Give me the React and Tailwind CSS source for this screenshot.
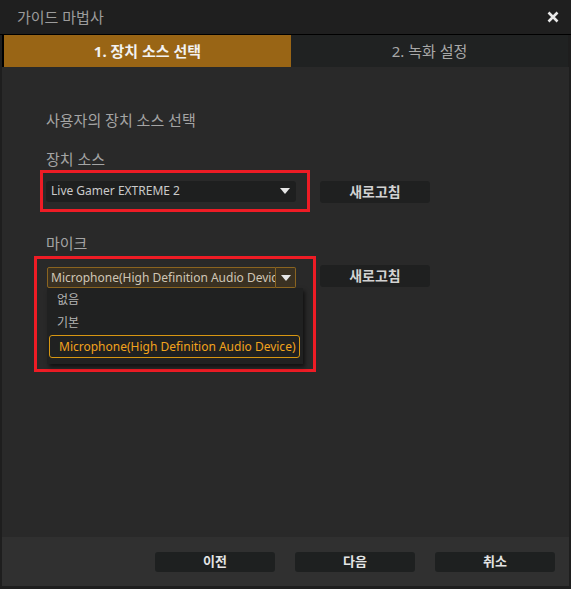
import React from 'react'

const font = { fontFamily: '"Noto Sans", "Noto Sans CJK KR", sans-serif' }

function Caret() {
  return (
    <svg width="10" height="6" viewBox="0 0 10 6">
      <path d="M0 0 L10 0 L5 6 Z" fill="#e6e6e6" />
    </svg>
  )
}

function RefreshButton() {
  return (
    <button className="block w-[110px] h-[22px] rounded-[3px] bg-[#1f2020] text-[14px] font-bold text-[#d2d2d2] leading-none">
      새로고침
    </button>
  )
}

function FooterButton({ children }) {
  return (
    <button className="block w-[120px] h-[20px] rounded-[3px] bg-[#1e2020] text-[13px] font-bold text-[#e4e4e4] leading-none">
      {children}
    </button>
  )
}

export default function App() {
  return (
    <div style={font} className="w-[571px] h-[589px] bg-[#1e1e1e] flex flex-col overflow-hidden">
      {/* title bar */}
      <div className="h-[34px] flex items-center justify-between pl-[17px] pr-[12px] bg-[#1f1f1f]">
        <span className="text-[15px] text-[#9c9c9c]">가이드 마법사</span>
        <svg width="12" height="12" viewBox="0 0 12 12">
          <path d="M1.5 1.5 L10.5 10.5 M10.5 1.5 L1.5 10.5" stroke="#e8e8e8" strokeWidth="2.6" />
        </svg>
      </div>
      <div className="h-[1px] bg-black" />

      {/* tabs */}
      <div className="h-[32px] flex pl-[2px] pr-[3px]">
        <div className="w-[2px] bg-black" />
        <div className="w-[287px] bg-[#996515] flex items-center justify-center text-[15px] font-bold text-[#f2f2f2]">
          1. 장치 소스 선택
        </div>
        <div className="flex-1 bg-[#202222] flex items-center justify-center text-[15px] text-[#a8a8a8]">
          2. 녹화 설정
        </div>
      </div>

      {/* content */}
      <div className="flex-1 mx-[2px] bg-[#292929] flex flex-col pt-[43px]">
        <div className="pl-[44px] text-[15px] text-[#a4a4a4] leading-[20px]">사용자의 장치 소스 선택</div>

        <div className="pl-[44px] mt-[19px] text-[15px] text-[#a4a4a4] leading-[20px]">장치 소스</div>
        <div className="flex items-start mt-[1px] pl-[38px]">
          <div className="w-[270px] h-[42px] border-[3px] border-[#ee1c25] flex items-center pl-[3px]">
            <div className="w-[250px] h-[21px] rounded-[3px] bg-[#1e1f1f] flex items-center justify-between pl-[5px] pr-[6px]">
              <span className="text-[12px] text-[#cacaca]">Live Gamer EXTREME 2</span>
              <Caret />
            </div>
          </div>
          <div className="ml-[10px] mt-[11px]">
            <RefreshButton />
          </div>
        </div>

        <div className="pl-[44px] mt-[21px] text-[15px] text-[#a4a4a4] leading-[20px]">마이크</div>
        <div className="flex items-start mt-[3px] pl-[32px]">
          <div className="w-[282px] h-[116px] border-[3px] border-[#ee1c25] pl-[10px] pt-[8px]">
            <div className="flex h-[21px] w-[249px]">
              <div className="w-[229px] h-[21px] border border-[#8a6420] bg-[#3a3122] flex items-center pl-[3px] overflow-hidden whitespace-nowrap rounded-l-[2px]">
                <span className="text-[12px] text-[#cfc6b6]">Microphone(High Definition Audio Devic</span>
              </div>
              <div className="w-[20px] h-[21px] border border-[#8a6420] border-l-0 bg-[#3a3122] flex items-center justify-center rounded-r-[2px]">
                <Caret />
              </div>
            </div>
            <div className="w-[256px] h-[76px] bg-[#202121] shadow-[2px_3px_4px_rgba(0,0,0,0.6)] flex flex-col pl-[2px]">
              <div className="h-[23px] flex items-center pl-[8px] text-[12px] text-[#b4b4b4]">없음</div>
              <div className="h-[24px] flex items-center pl-[8px] text-[12px] text-[#b4b4b4]">기본</div>
              <div className="w-[251px] h-[23px] border border-[#d69612] rounded-[3px] flex items-center pl-[9px] text-[12px] text-[#f2a31c] whitespace-nowrap">
                Microphone(High Definition Audio Device)
              </div>
            </div>
          </div>
          <div className="ml-[4px] mt-[9px]">
            <RefreshButton />
          </div>
        </div>
      </div>

      {/* footer */}
      <div className="h-[49px] mx-[2px] bg-[#303030] flex items-center justify-end gap-[20px] pr-[14px]">
        <FooterButton>이전</FooterButton>
        <FooterButton>다음</FooterButton>
        <FooterButton>취소</FooterButton>
      </div>
      <div className="h-[3px]" />
    </div>
  )
}
